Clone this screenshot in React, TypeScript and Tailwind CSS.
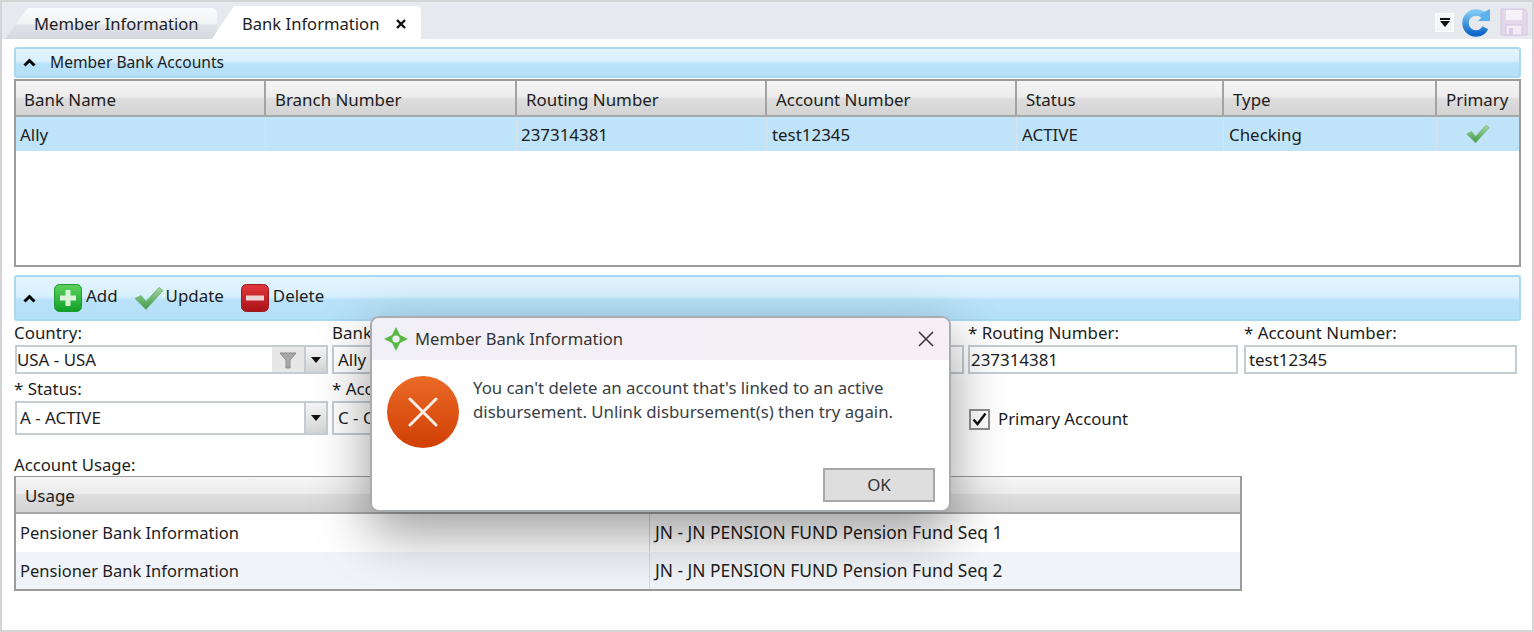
const font = "font-['Noto_Sans',sans-serif]";

const Chevron = () => (
  <svg width="13" height="9" viewBox="0 0 13 9" className="shrink-0">
    <path d="M1.5 7.5 L6.5 2.5 L11.5 7.5" fill="none" stroke="#000" strokeWidth="3" />
  </svg>
);

const Caret = () => (
  <svg width="10" height="6" viewBox="0 0 10 6"><path d="M0 0H10L5 6Z" fill="#111" /></svg>
);

const Check = ({ w = 24, h = 20 }: { w?: number; h?: number }) => (
  <svg width={w} height={h} viewBox="0 0 30 24">
    <defs>
      <linearGradient id="chk" x1="0" y1="0" x2="0" y2="1">
        <stop offset="0" stopColor="#a5d6a0" />
        <stop offset="1" stopColor="#3f9a48" />
      </linearGradient>
    </defs>
    <path d="M1 12 L7 9 L12 15 L25 1 L29 4 L12 23 Z" fill="url(#chk)" stroke="#6bb070" strokeWidth="0.8" />
  </svg>
);

const HeaderCell = ({ children, className = "" }: { children?: React.ReactNode; className?: string }) => (
  <div className={"flex items-center border-r-2 border-[#a3a3a3] last:border-r-0 " + className}>{children}</div>
);

const hdr = "bg-[linear-gradient(#f5f5f5_0%,#ececec_48%,#dedede_50%,#d3d3d3_100%)] border-b-2 border-[#a8a8a8]";

function Collapse({ children, className }: { children: React.ReactNode; className: string }) {
  return (
    <div className={"flex items-center rounded-[3px] border-2 border-[#a9d8f2] bg-[linear-gradient(#e3f4fe_0%,#d9f0fd_45%,#b8e2f9_55%,#b4e0f8_100%)] " + className}>
      {children}
    </div>
  );
}

const Label = ({ children }: { children?: React.ReactNode }) => <div className="h-[20px] leading-[18px] whitespace-nowrap">{children}</div>;

const Input = ({ children, className = "" }: { children?: React.ReactNode; className?: string }) => (
  <div className={"flex items-center border-2 border-[#c6ccd3] bg-white whitespace-nowrap overflow-hidden " + className}>{children}</div>
);

const DropBtn = () => (
  <div className="flex items-center justify-center w-[22px] self-stretch border-l-2 border-[#c6ccd3] bg-[linear-gradient(#f5f5f5_0%,#e6e6e6_50%,#d5d5d5_100%)]">
    <Caret />
  </div>
);

const cols = "grid grid-cols-[250px_251px_250px_250px_207px_213px_1fr]";

const headers = [
  { t: "Bank Name", c: "pl-[8px]" },
  { t: "Branch Number", c: "pl-[9px]" },
  { t: "Routing Number", c: "pl-[9px]" },
  { t: "Account Number", c: "pl-[9px]" },
  { t: "Status", c: "pl-[9px]" },
  { t: "Type", c: "pl-[9px]" },
  { t: "Primary", c: "pl-[9px]" },
];

const cells = [
  { t: "Ally", c: "pl-[4px]" },
  { t: "", c: "pl-[4px]" },
  { t: "237314381", c: "pl-[4px]" },
  { t: "test12345", c: "pl-[5px]" },
  { t: "ACTIVE", c: "pl-[5px]" },
  { t: "Checking", c: "pl-[5px]" },
];

export default function App() {
  return (
    <div className={font + " relative w-[1534px] h-[632px] overflow-hidden bg-white border-2 border-[#d2d4d6] text-[16.9px] text-[#1d1d1d] leading-none"}>
      {/* Tab strip */}
      <div className="h-[37px] bg-[#e6e9ee] flex items-end pl-[3px] pr-[4px]">
        <div className="relative w-[212px] h-[31px] pl-[29px] pt-[4px] leading-[24px] text-[16.6px] rounded-tr-[5px] [clip-path:polygon(0_100%,23px_0,100%_0,100%_100%)] bg-[linear-gradient(#fafbfc_0%,#f2f3f5_50%,#dfe2e7_55%,#d5d8de_100%)]">
          Member Information
        </div>
        <div className="relative -ml-[5px] w-[209px] h-[33px] pl-[30px] pt-[5px] leading-[26px] text-[16.6px] bg-white rounded-tr-[5px] flex gap-[16px] [clip-path:polygon(0_100%,22px_0,100%_0,100%_100%)]">
          <span>Bank Information</span>
          <svg width="10" height="10" viewBox="0 0 10 10" className="mt-[8px] ml-[1px]">
            <path d="M1 1L9 9M9 1L1 9" stroke="#111" strokeWidth="2.4" />
          </svg>
        </div>
        <div className="flex-1" />
        <div className="flex items-start gap-[9px] self-start pt-[5px]">
          <div className="mt-[6px] w-[19px] h-[19px] bg-[#f4f5f6] flex flex-col items-center justify-center gap-[1px] border border-white">
            <div className="w-[10px] h-[2px] bg-[#111]" />
            <Caret />
          </div>
          <svg width="30" height="30" viewBox="0 0 30 30" className="-ml-[1px]">
            <defs>
              <linearGradient id="rf" x1="0" y1="0" x2="0" y2="1">
                <stop offset="0" stopColor="#7cc7f4" />
                <stop offset="1" stopColor="#1068c9" />
              </linearGradient>
            </defs>
            <circle cx="14" cy="16" r="10.5" fill="none" stroke="url(#rf)" strokeWidth="6.5" strokeDasharray="56 10" strokeDashoffset="-5" />
            <path d="M28 2 V14 H16 L20.5 9.5 L18 7 Z" fill="#5bb0ee" />
          </svg>
          <svg width="28" height="28" viewBox="0 0 28 28" className="-ml-[1px] mt-[1px]">
            <path d="M1 1H24L27 4V27H1Z" fill="#e3d7ec" stroke="#d4c6e2" />
            <rect x="6" y="2" width="16" height="10" fill="#f6f3f8" />
            <rect x="6" y="17" width="16" height="10" fill="#f1ecf5" stroke="#d4c6e2" />
            <rect x="9" y="20" width="4" height="7" fill="#d9cce6" />
          </svg>
        </div>
      </div>

      <div className="px-[12px] pt-[8px]">
        {/* Member Bank Accounts */}
        <Collapse className="h-[31px] gap-[14px] pl-[7px] mr-[-1px]">
          <Chevron />
          <span className="pt-px text-[15.6px]">Member Bank Accounts</span>
        </Collapse>
        <div className="mt-px h-[188px] border-2 border-[#9b9b9b] mr-[-1px] bg-white">
          <div className={cols + " h-[36px] " + hdr}>
            {headers.map((h) => (
              <HeaderCell key={h.t} className={"pt-[4px] " + h.c}>{h.t}</HeaderCell>
            ))}
          </div>
          <div className={cols + " h-[34px] bg-[#bfe4f9]"}>
            {cells.map((c, i) => (
              <div key={i} className={"flex items-center pt-[2px] border-r border-[#d7e3ea] " + c.c}>{c.t}</div>
            ))}
            <div className="flex items-center justify-center"><Check /></div>
          </div>
        </div>

        {/* Toolbar */}
        <Collapse className="mt-[8px] h-[46px] pl-[7px] mr-[-1px]">
          <Chevron />
          <svg width="28" height="28" viewBox="0 0 28 28" className="ml-[18px]">
            <defs>
              <linearGradient id="grn" x1="0" y1="0" x2="0" y2="1"><stop offset="0" stopColor="#5ed35e" /><stop offset="1" stopColor="#10a028" /></linearGradient>
            </defs>
            <rect x="0.5" y="0.5" width="27" height="27" rx="5" fill="url(#grn)" stroke="#1b9a30" />
            <path d="M14 6V22M6 14H22" stroke="#d9f3d9" strokeWidth="5" />
          </svg>
          <span className="ml-[4px] pb-[3px]">Add</span>
          <span className="ml-[16px]"><Check w={30} h={25} /></span>
          <span className="ml-[2px] pb-[3px]">Update</span>
          <svg width="28" height="28" viewBox="0 0 28 28" className="ml-[17px]">
            <defs>
              <linearGradient id="rd" x1="0" y1="0" x2="0" y2="1"><stop offset="0" stopColor="#e2383c" /><stop offset="1" stopColor="#a91218" /></linearGradient>
            </defs>
            <rect x="0.5" y="0.5" width="27" height="27" rx="5" fill="url(#rd)" stroke="#9b1a1e" />
            <rect x="5" y="11.5" width="18" height="5" fill="#eed5d5" />
          </svg>
          <span className="ml-[4px] pb-[3px]">Delete</span>
        </Collapse>

        {/* Form */}
        <div className="grid grid-cols-[318px_318px_318px_276px_273px] mt-[3px] mr-[3px]">
          <div className="pr-[4px]">
            <Label>Country:</Label>
            <Input className="h-[29px] mt-px ml-px justify-between pt-px">
              <span>USA - USA</span>
              <div className="flex self-stretch -mt-px">
                <div className="w-[32px] flex items-center justify-center bg-[#e7e7e7]">
                  <svg width="18" height="18" viewBox="0 0 18 18"><path d="M1 2H17L11 9V17H7V9Z" fill="#a8a8a8" stroke="#8a8a8a" /></svg>
                </div>
                <DropBtn />
              </div>
            </Input>
          </div>
          <div className="pr-[4px]">
            <Label>Bank</Label>
            <Input className="h-[29px] mt-px pl-[4px] pt-px">Ally</Input>
          </div>
          <div className="pr-[4px]">
            <Label />
            <Input className="h-[29px] mt-px" />
          </div>
          <div className="pr-[6px]">
            <Label>* Routing Number:</Label>
            <Input className="h-[29px] mt-px pl-px pt-px">237314381</Input>
          </div>
          <div>
            <Label>* Account Number:</Label>
            <Input className="h-[29px] mt-px pl-[3px] pt-px">test12345</Input>
          </div>
          <div className="pr-[4px] mt-[6px]">
            <Label>* Status:</Label>
            <Input className="h-[34px] mt-px ml-px justify-between pl-[3px] pt-px">
              <span>A - ACTIVE</span>
              <div className="flex self-stretch -mt-px"><DropBtn /></div>
            </Input>
          </div>
          <div className="pr-[4px] mt-[6px] col-span-2 mr-[318px]">
            <Label>* Acc</Label>
            <Input className="h-[34px] mt-px pl-[4px] pt-px">C - C</Input>
          </div>
          <div className="mt-[29px] flex items-center gap-[8px] h-[32px] pl-px col-span-2">
            <div className="w-[21px] h-[21px] border-2 border-[#8e8e8e] bg-white flex items-center justify-center">
              <svg width="15" height="14" viewBox="0 0 15 14"><path d="M1.5 7.5L5.5 12L13.5 1.5" fill="none" stroke="#111" strokeWidth="2.4" /></svg>
            </div>
            <span className="text-[16.8px]">Primary Account</span>
          </div>
        </div>

        {/* Account usage */}
        <div className="mt-[20px] h-[20px] leading-[20px] text-[16.7px]">Account Usage:</div>
        <div className="mt-px w-[1228px] border-x-2 border-t border-b-2 border-[#9b9b9b] bg-white">
          <div className={"grid grid-cols-[634px_1fr] h-[37px] " + hdr}>
            <HeaderCell className="pl-[9px] pt-[3px]">Usage</HeaderCell>
            <HeaderCell />
          </div>
          {["1", "2"].map((n, i) => (
            <div key={n} className={"grid grid-cols-[634px_1fr] " + (i === 1 ? "h-[37px] pt-px bg-[#f0f4f8]" : "h-[38px] bg-white")}>
              <div className="flex items-center pl-[4px] border-r border-[#d4d8dc] text-[16.5px]">Pensioner Bank Information</div>
              <div className="flex items-center pl-[5px] text-[17.4px]">JN - JN PENSION FUND Pension Fund Seq {n}</div>
            </div>
          ))}
        </div>
      </div>

      {/* Dialog */}
      <div className="absolute left-[368px] top-[314px] w-[581px] h-[196px] rounded-[9px] bg-white border-2 border-[#a9acaf] shadow-[0_20px_55px_rgba(0,0,0,0.4)] overflow-hidden text-[#2c2c2c]">
        <div className="h-[42px] bg-[linear-gradient(90deg,#f1f0f6,#f6eef5)] flex items-center pl-[11px] pr-[15px]">
          <svg width="26" height="26" viewBox="0 0 26 26">
            <path d="M13 1 L17 9 L25 13 L17 17 L13 25 L9 17 L1 13 L9 9 Z" fill="#58b947" />
            <circle cx="13" cy="13" r="3.6" fill="#f1f0f6" />
          </svg>
          <span className="ml-[6px] text-[#333] text-[16.6px]">Member Bank Information</span>
          <svg width="16" height="16" viewBox="0 0 16 16" className="ml-auto">
            <path d="M1 1L15 15M15 1L1 15" stroke="#333" strokeWidth="1.5" />
          </svg>
        </div>
        <div className="flex pl-[15px] pt-[16px]">
          <div className="w-[72px] h-[72px] rounded-full bg-[linear-gradient(#ea6a26,#d13f04)] flex items-center justify-center shrink-0">
            <svg width="30" height="30" viewBox="0 0 30 30"><path d="M2 2L28 28M28 2L2 28" stroke="#fbeee6" strokeWidth="3" strokeLinecap="round" /></svg>
          </div>
          <div className="ml-[14px] text-[16.8px] leading-[24px] text-[#3a3f46]">
            You can't delete an account that's linked to an active<br />
            disbursement. Unlink disbursement(s) then try again.
          </div>
        </div>
        <div className="absolute right-[14px] bottom-[8px] w-[112px] h-[34px] bg-[#dedede] border-2 border-[#a8a8a8] flex items-center justify-center text-[#333]">OK</div>
      </div>
    </div>
  );
}
